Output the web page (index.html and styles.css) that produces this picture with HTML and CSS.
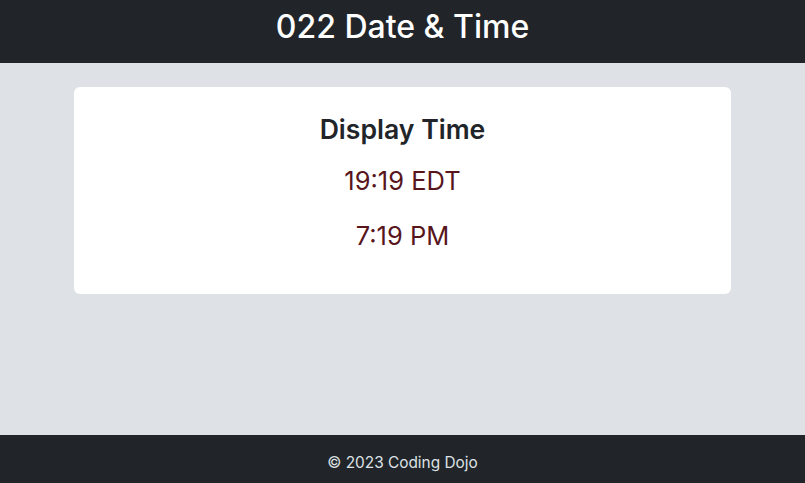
FILE: index.html
```html
<!DOCTYPE html>
<html lang="en">
<head>
<meta charset="utf-8">
<title>022 Date &amp; Time</title>
<link rel="stylesheet" href="styles.css">
</head>
<body>
<header class="site-header">
  <h1 class="site-title">022 Date &amp; Time</h1>
</header>
<main class="site-main">
  <section class="card">
    <h2 class="card-title">Display Time</h2>
    <p class="time">19:19 EDT</p>
    <p class="time">7:19 PM</p>
  </section>
</main>
<footer class="site-footer">© 2023 Coding Dojo</footer>
</body>
</html>
```

FILE: styles.css
```css
* { box-sizing: border-box; }
html, body { margin: 0; padding: 0; }
body {
  font-family: Inter, "Noto Sans", sans-serif;
  color: #212529;
  background: #dee2e6;
  height: 100vh;
  display: flex;
  flex-direction: column;
  overflow: hidden;
}
.site-header {
  background: #212529;
  padding: 8px 0 0;
  text-align: center;
}
.site-title {
  margin: 0 0 17px;
  font-size: 32px;
  line-height: 38px;
  font-weight: 500;
  color: #fff;
}
.site-main {
  flex: 1;
  padding-top: 24px;
}
.card {
  width: 657px;
  margin: 0 auto;
  background: #fff;
  border-radius: 6px;
  padding: 26px 16px 22px;
  text-align: center;
}
.card-title {
  margin: 0 0 17px;
  font-size: 26.6px;
  line-height: 32px;
  font-weight: 600;
}
.time {
  margin: 0 0 17px;
  font-size: 25.5px;
  line-height: 38px;
  color: #58151c;
}
.site-footer {
  background: #212529;
  color: #dee2e6;
  text-align: center;
  font-size: 15.4px;
  line-height: 24px;
  padding: 16px 0 8px;
}
```
